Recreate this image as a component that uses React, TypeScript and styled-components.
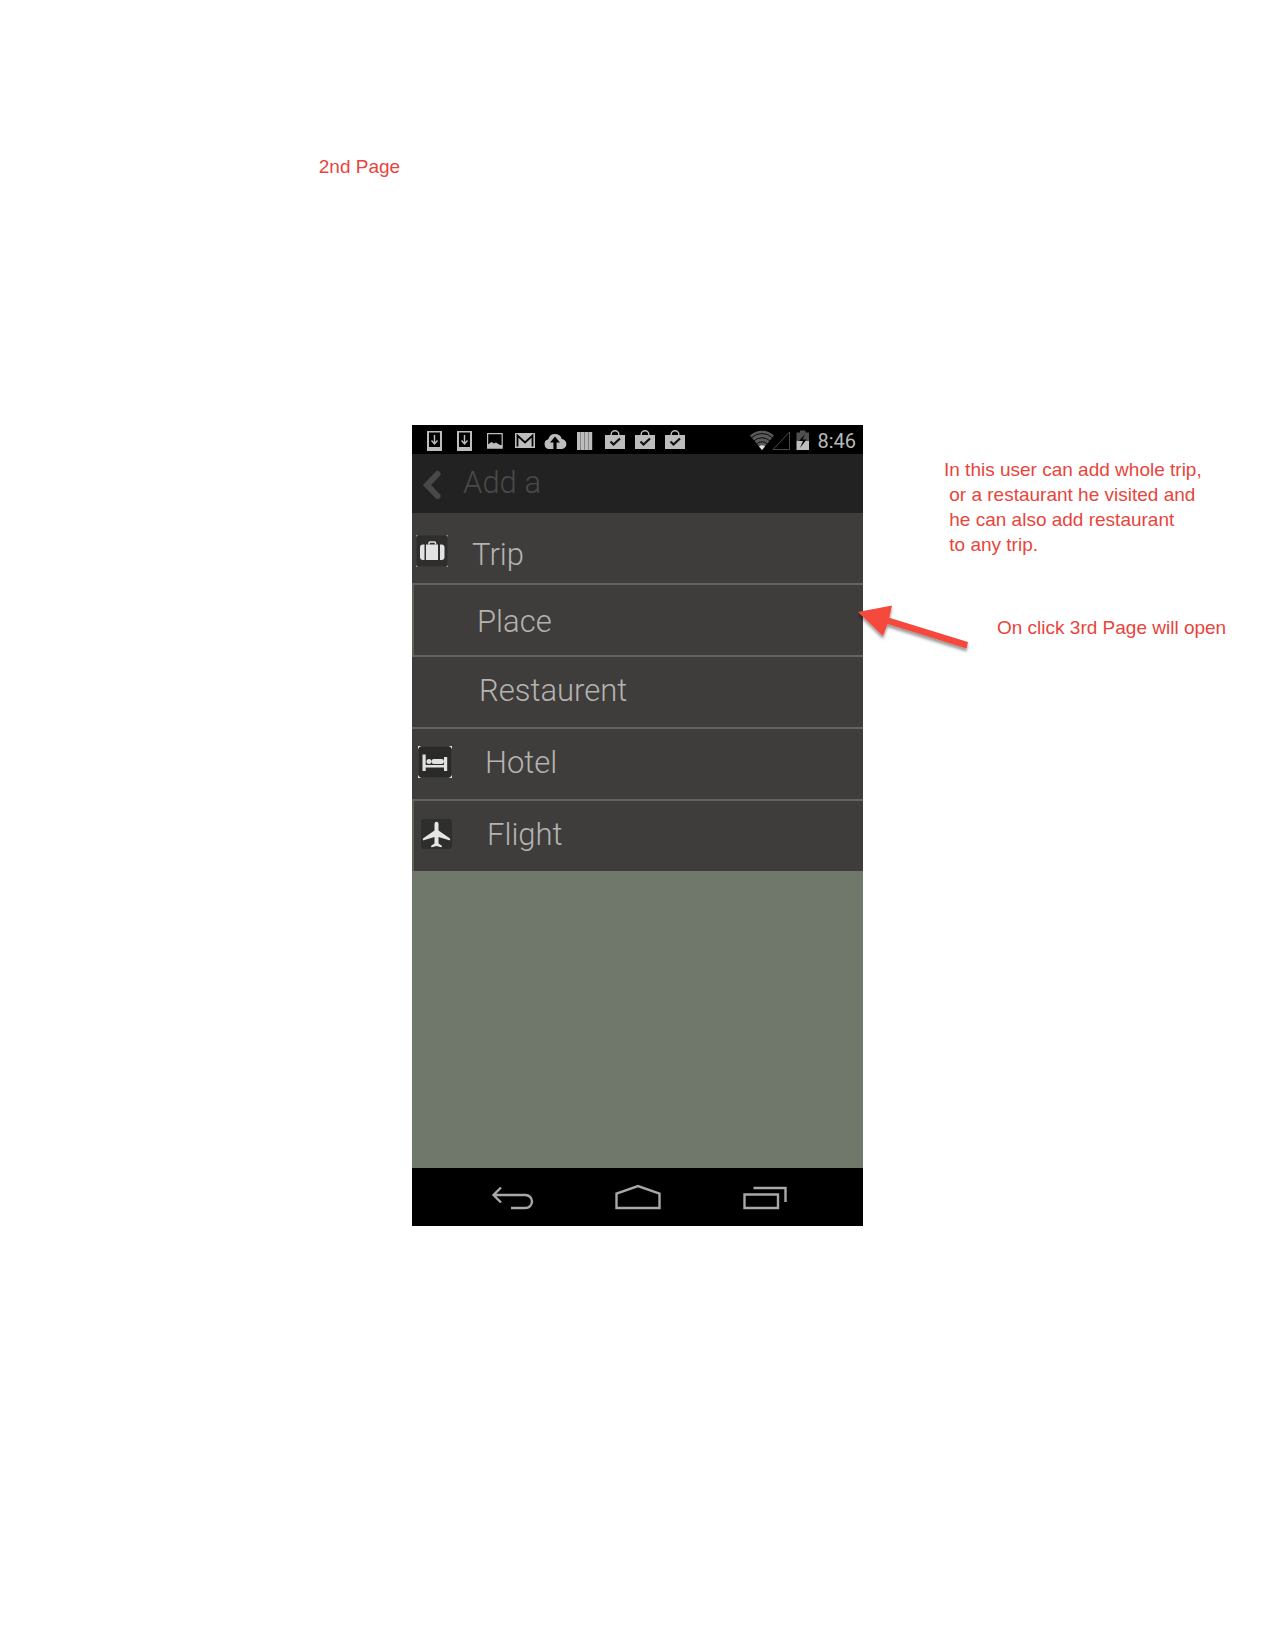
import React from 'react';
import styled, { createGlobalStyle } from 'styled-components';

const GlobalStyle = createGlobalStyle`
  *, *::before, *::after { box-sizing: border-box; }
  body { margin: 0; background: #ffffff; }
`;

const Page = styled.div`
  min-height: 100vh;
  padding: 154px 0 80px;
  font-family: 'Liberation Sans', Arial, sans-serif;
`;

const PageTitle = styled.h1`
  margin: 0 0 246px 25%;
  font-size: 19px;
  line-height: 25px;
  font-weight: 400;
  color: #e8453c;
`;

const Board = styled.main`
  display: grid;
  grid-template-columns: minmax(0, 1fr) minmax(300px, 451px) minmax(0, 1fr);
`;

const Phone = styled.section`
  grid-column: 2;
  display: flex;
  flex-direction: column;
  min-height: 801px;
  background: #70776b;
  font-family: Roboto, 'Liberation Sans', sans-serif;
`;

const StatusBar = styled.div`
  display: flex;
  align-items: center;
  height: 29px;
  padding: 0 7px 0 8px;
  background: #000000;
`;

const Glyph = styled.svg`
  display: block;
  flex: none;
`;

const StatusRight = styled.div`
  display: flex;
  align-items: center;
  gap: 7px;
  margin-left: auto;
`;

const Clock = styled.time`
  padding-top: 4px;
  font-size: 20px;
  line-height: 25px;
  color: #b8b8b8;
`;

const AppBar = styled.header`
  display: flex;
  align-items: center;
  gap: 21px;
  height: 59px;
  padding: 0 10px 2px;
  background: #222222;
`;

const BackButton = styled.button`
  padding: 4px 0 0;
  border: 0;
  background: none;
  cursor: pointer;
`;

const AppTitle = styled.h2`
  margin: 0;
  font-size: 31px;
  line-height: 40px;
  font-weight: 300;
  color: #494949;
`;

const Menu = styled.ul`
  margin: 0;
  padding: 0;
  list-style: none;
`;

const MenuItem = styled.li<{ $first: boolean; $boxed: boolean; $last: boolean }>`
  position: relative;
  height: ${(p) => (p.$last ? 70 : 72)}px;
  padding: ${(p) => (p.$first ? 10 : 0)}px 0 4px;
  border-bottom: ${(p) => (p.$last ? 0 : 2)}px solid #64635f;
  box-shadow: ${(p) => (p.$boxed ? 'inset 2px 0 0 #5d5e58' : 'none')};
  background: #3e3d3b;
`;

const MenuButton = styled.button<{ $inset: number }>`
  display: flex;
  align-items: center;
  width: 100%;
  height: 100%;
  padding: 0 0 0 ${(p) => p.$inset}px;
  border: 0;
  background: none;
  font-family: inherit;
  font-size: 31px;
  line-height: 40px;
  font-weight: 300;
  color: #b4b3b0;
  text-align: left;
  cursor: pointer;
`;

const IconSlot = styled.span<{ $gap: number }>`
  display: flex;
  width: 32px;
  margin-right: ${(p) => p.$gap}px;
`;

const Label = styled.span<{ $low: boolean }>`
  padding-top: ${(p) => (p.$low ? 8 : 2)}px;
`;

const Pointer = styled.svg`
  position: absolute;
  top: 14px;
  right: -112px;
  z-index: 1;
  pointer-events: none;
`;

const NavBar = styled.nav`
  display: flex;
  justify-content: center;
  height: 58px;
  margin-top: auto;
  background: #000000;
`;

const NavButton = styled.button`
  display: flex;
  flex: 0 1 126px;
  align-items: center;
  justify-content: center;
  padding: 0;
  border: 0;
  background: none;
  cursor: pointer;
`;

const Notes = styled.aside`
  display: flex;
  flex-direction: column;
  gap: 58px;
  padding: 32px 0 0 81px;
`;

const Note = styled.p<{ $shift?: number }>`
  margin: 0 0 0 ${(p) => p.$shift ?? 0}px;
  font-size: 19px;
  line-height: 25px;
  white-space: pre;
  color: #e8453c;
`;

const LIGHT = '#bdbdbd';

function StatusGlyph({ children }: { children: React.ReactNode }) {
  return (
    <Glyph width="30" height="29" viewBox="0 0 30 29" aria-hidden="true">
      {children}
    </Glyph>
  );
}

const DownloadGlyph = () => (
  <StatusGlyph>
    <path fill={LIGHT} fillRule="evenodd" d="M7 6h15v20H7zM9 7.5v14.500h11V7.500z" />
    <path fill="none" stroke={LIGHT} strokeWidth="1.400" d="M14.500 10v8.500M11.500 15.500l3 3.500 3-3.500" />
  </StatusGlyph>
);

const PictureGlyph = () => (
  <StatusGlyph>
    <path fill="none" stroke={LIGHT} strokeWidth="1.200" d="M7.600 8.600h14.600v14.600H7.600z" />
    <path fill={LIGHT} d="M8 19.500l3.500-2.500 2.500 1.500 2-1 4 2.500h2v3H8z" />
  </StatusGlyph>
);

const MailGlyph = () => (
  <StatusGlyph>
    <path fill={LIGHT} d="M5 8h20v15H5z" />
    <path fill="none" stroke="#000" strokeWidth="1.800" d="M7.500 21.500V10.500l7.500 7 7.500-7v11" />
  </StatusGlyph>
);

const CloudGlyph = () => (
  <StatusGlyph>
    <path fill={LIGHT} d="M9 24a5 5 0 0 1-.7-9.800 7 7 0 0 1 13.500-.2A5 5 0 0 1 21 24z" />
    <path fill="#000" d="M15 11.500l5 6h-3.400V25h-3.200v-7.500H10z" />
  </StatusGlyph>
);

const BarsGlyph = () => (
  <StatusGlyph>
    <path fill="#777" d="M7 7h15v18H7z" />
    <path fill={LIGHT} d="M7 7h3.200v18H7zM11 7h3.200v18H11zM15 7h3.200v18H15zM19 7h3.200v18H19z" />
  </StatusGlyph>
);

const BagGlyph = () => (
  <StatusGlyph>
    <path fill={LIGHT} d="M5 10h20v14H5z" />
    <path fill="none" stroke={LIGHT} strokeWidth="1.400" d="M11.200 11V9a3.800 3.300 0 0 1 7.600 0v2" />
    <path fill="none" stroke="#111" strokeWidth="2.200" d="M10.500 16.500l3 3 6.500-6" />
  </StatusGlyph>
);

const SignalGlyph = () => (
  <Glyph width="60" height="29" viewBox="0 0 60 29" aria-hidden="true">
    <path fill="#5a5a5a" d="M0 10.500a17.500 17.500 0 0 1 24 0L12 25z" />
    <path
      fill="none"
      stroke="#0c0c0c"
      strokeWidth="1"
      d="M1.500 12.800a15 15 0 0 1 21 0M4 16a11.500 11.500 0 0 1 16 0M6.500 19a8 8 0 0 1 11 0"
    />
    <path fill="#e0e0e0" d="M9 21.500a4.500 4.500 0 0 1 6 0L12 25z" />
    <path fill="none" stroke="#484848" strokeWidth="1" d="M23 24.500h16.500V7z" />
    <path fill="#505050" d="M50 5.500h5.500V7.500H59V16H46.500V7.500H50z" />
    <path fill={LIGHT} d="M46.500 16H59v9H46.500z" />
    <path fill="#000" d="M55 9l-6 7h4l-3 7 6.500-8.500h-4z" />
  </Glyph>
);

const CaseIcon = () => (
  <Glyph width="32" height="32" viewBox="0 0 32 32" aria-hidden="true">
    <path fill="none" stroke="#aaa" d="M.5 1.500v-1h1M30.500.5h1v1M.5 30.500v1h1M30.500 31.500h1v-1" />
    <rect x=".5" y=".5" width="31" height="31" rx="2" fill="#2e2e2d" />
    <path
      fill="#e2e2e2"
      d="M7 9.500h1.500V25H7a3 3 0 0 1-3-3v-9.500a3 3 0 0 1 3-3zM10 9.500h12V25H10zM24 9.500h1.500a3 3 0 0 1 3 3V22a3 3 0 0 1-3 3H24z"
    />
    <path fill="none" stroke="#e2e2e2" strokeWidth="1.500" d="M13 9.500V8a1 1 0 0 1 1-1h4.500a1 1 0 0 1 1 1v1.500" />
  </Glyph>
);

const BedIcon = () => (
  <Glyph width="34" height="32" viewBox="0 0 34 32" aria-hidden="true">
    <path fill="none" stroke="#ddd" strokeWidth="1.500" d="M.5 2.500v-2h2M31.500.5h2v2M.5 29.500v2h2M31.500 31.500h2v-2" />
    <rect x=".8" y=".8" width="32.400" height="30.400" rx="2" fill="#2a2a29" />
    <path fill="#e2e2e2" d="M4.500 8.500h3.200V19H26v-8h3.200v14H26v-3.500H7.700V25H4.500z" />
    <circle cx="11" cy="15.500" r="2.500" fill="#e2e2e2" />
    <rect x="13.500" y="13" width="12.500" height="5" rx="2.400" fill="#e2e2e2" />
  </Glyph>
);

const PlaneIcon = () => (
  <Glyph width="32" height="32" viewBox="0 0 32 32" aria-hidden="true">
    <rect x="0" y="1" width="31" height="30" rx="3" fill="#2e2e2d" />
    <path
      fill="#e6e6e6"
      d="M13.500 6c0-3 4-3 4 0v6.500l11.200 7.700c.8.600.6 2.400-.4 2.100L17.500 19v6.500l3 2c.8.600.5 1.900-.3 1.700L15.500 28l-4.700 1.200c-.8.200-1.100-1.100-.3-1.700l3-2V19L2.700 22.300c-1 .3-1.200-1.500-.4-2.100l11.200-7.700z"
    />
  </Glyph>
);

type Entry = {
  label: string;
  inset: number;
  gap?: number;
  icon?: React.ReactNode;
  low?: boolean;
  boxed?: boolean;
  pointed?: boolean;
};

const entries: Entry[] = [
  { label: 'Trip', inset: 4, gap: 24, icon: <CaseIcon />, low: true },
  { label: 'Place', inset: 65, low: true, boxed: true, pointed: true },
  { label: 'Restaurent', inset: 67 },
  { label: 'Hotel', inset: 6, gap: 35, icon: <BedIcon /> },
  { label: 'Flight', inset: 9, gap: 34, icon: <PlaneIcon />, boxed: true },
];

const PointerArrow = () => (
  <Pointer width="120" height="60" viewBox="0 0 120 60" aria-hidden="true">
    <defs>
      <filter id="arrowShadow" x="-10%" y="-10%" width="120%" height="140%">
        <feDropShadow dx="0" dy="3" stdDeviation="1.500" floodColor="#000" floodOpacity="0.400" />
      </filter>
    </defs>
    <path
      fill="#f5483c"
      filter="url(#arrowShadow)"
      d="M3 13L37 6.500l-2.700 12.300L113 43l-1.500 6.500L32.500 25 28 37z"
    />
  </Pointer>
);

export default function App() {
  return (
    <>
      <GlobalStyle />
      <Page>
        <PageTitle>2nd Page</PageTitle>
        <Board>
          <Phone>
            <StatusBar>
              <DownloadGlyph />
              <DownloadGlyph />
              <PictureGlyph />
              <MailGlyph />
              <CloudGlyph />
              <BarsGlyph />
              <BagGlyph />
              <BagGlyph />
              <BagGlyph />
              <StatusRight>
                <SignalGlyph />
                <Clock>8:46</Clock>
              </StatusRight>
            </StatusBar>
            <AppBar>
              <BackButton aria-label="Back">
                <Glyph width="20" height="30" viewBox="0 0 20 30" aria-hidden="true">
                  <path
                    fill="none"
                    stroke="#484848"
                    strokeWidth="6"
                    strokeLinecap="round"
                    d="M15.500 4L5 15l10.500 11"
                  />
                </Glyph>
              </BackButton>
              <AppTitle>Add a</AppTitle>
            </AppBar>
            <Menu>
              {entries.map((entry, i) => (
                <MenuItem
                  key={entry.label}
                  $first={i === 0}
                  $last={i === entries.length - 1}
                  $boxed={!!entry.boxed}
                >
                  <MenuButton $inset={entry.inset}>
                    {entry.icon && <IconSlot $gap={entry.gap ?? 0}>{entry.icon}</IconSlot>}
                    <Label $low={!!entry.low}>{entry.label}</Label>
                  </MenuButton>
                  {entry.pointed && <PointerArrow />}
                </MenuItem>
              ))}
            </Menu>
            <NavBar aria-label="System">
              <NavButton aria-label="Go back">
                <Glyph width="46" height="26" viewBox="0 0 46 26" aria-hidden="true">
                  <path
                    fill="none"
                    stroke="#a8a8a8"
                    strokeWidth="2.400"
                    d="M12 3.500L4.500 11l7.500 7.500M4.500 11h32a6.500 6.500 0 0 1 0 13H22"
                  />
                </Glyph>
              </NavButton>
              <NavButton aria-label="Home">
                <Glyph width="46" height="26" viewBox="0 0 46 26" aria-hidden="true">
                  <path fill="none" stroke="#a8a8a8" strokeWidth="2.400" d="M1.500 24V9.500L23 2l21.500 7.500V24z" />
                </Glyph>
              </NavButton>
              <NavButton aria-label="Recent apps">
                <Glyph width="46" height="26" viewBox="0 0 46 26" aria-hidden="true">
                  <path
                    fill="none"
                    stroke="#a8a8a8"
                    strokeWidth="2.400"
                    d="M3.500 10.500H37V24H3.500zM12.500 4H44.500v14"
                  />
                </Glyph>
              </NavButton>
            </NavBar>
          </Phone>
          <Notes>
            <Note>
              {'In this user can add whole trip,\n or a restaurant he visited and\n he can also add restaurant\n to any trip.'}
            </Note>
            <Note $shift={53}>On click 3rd Page will open</Note>
          </Notes>
        </Board>
      </Page>
    </>
  );
}
